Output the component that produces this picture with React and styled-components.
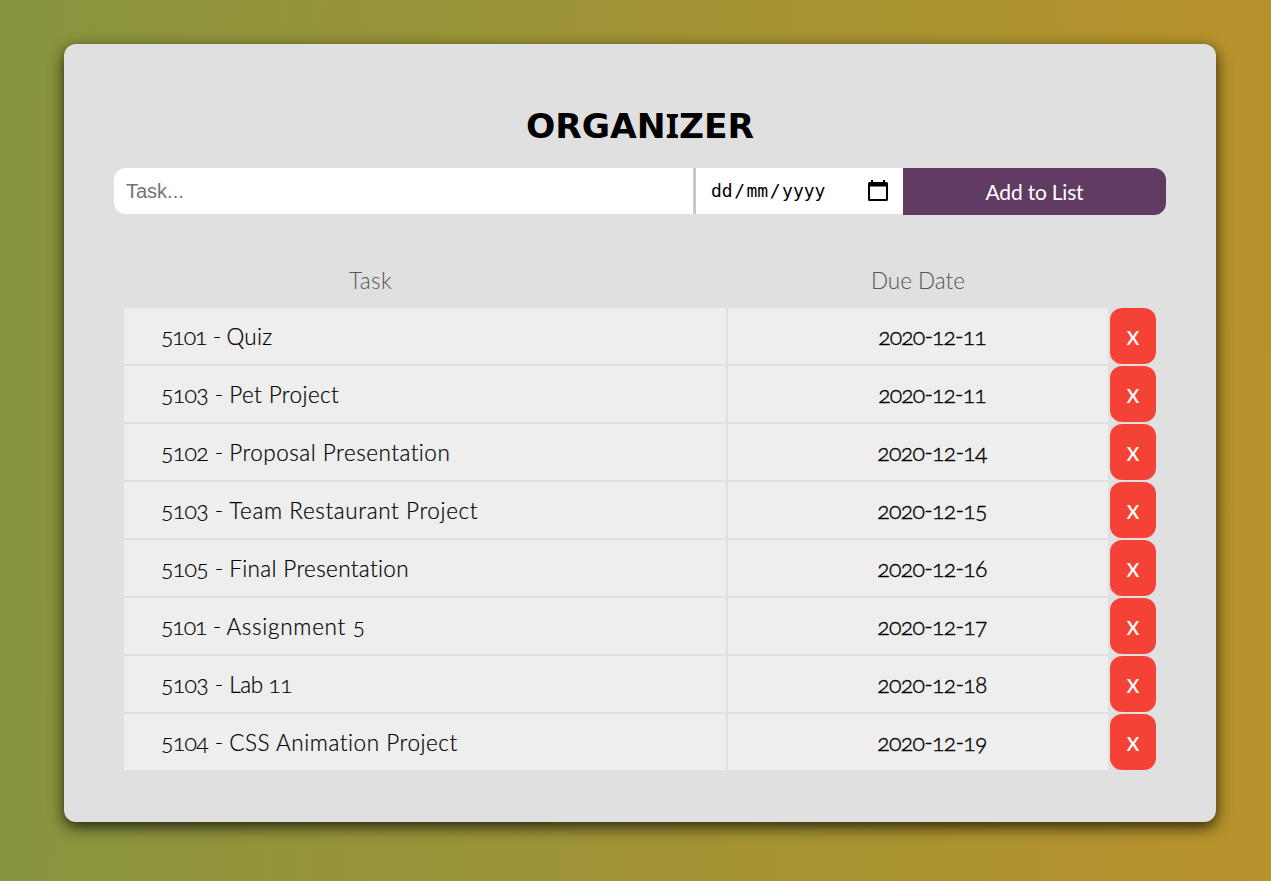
import React from "react";
import styled, { createGlobalStyle } from "styled-components";

const GlobalStyle = createGlobalStyle`
  *, *::before, *::after { box-sizing: border-box; }
  html { height: 100%; }
  body {
    margin: 0;
    min-height: 881px;
    background: linear-gradient(91deg, #88943f 0%, #b8922b 100%);
    font-family: Lato, "Liberation Sans", sans-serif;
    font-variant-numeric: oldstyle-nums;
    font-variant-ligatures: none;
    color: #000;
  }
`;

const Page = styled.main`
  min-height: 881px;
  padding: 44px 55px 59px 64px;
`;

const Card = styled.section`
  width: 1152px;
  height: 778px;
  padding: 59px 50px 0;
  background: #e0e0e0;
  border-radius: 12px;
  box-shadow: 0 5px 15px rgba(0, 0, 0, 0.75);
`;

const Title = styled.h1`
  margin: 0;
  height: 65px;
  font: 700 34.5px/47px "DejaVu Sans", sans-serif;
  text-align: center;
`;

const SerifCapital = styled.span`
  font-family: "Noto Sans", sans-serif;
  font-size: 34px;
  line-height: 1;
`;

const Form = styled.div`
  display: flex;
  align-items: flex-start;
  height: 47px;
`;

const TaskInput = styled.input`
  width: 579px;
  height: 46px;
  padding: 0 12px;
  border: 0;
  border-radius: 12px 0 0 12px;
  background: #fff;
  font: 20px "Liberation Sans", Arial, sans-serif;
  outline: none;
  &::placeholder { color: #757575; opacity: 1; }
`;

const DateField = styled.div`
  display: flex;
  align-items: center;
  justify-content: space-between;
  width: 210px;
  height: 46px;
  padding: 0 14px 0 15px;
  border-left: 3px solid #c8c8c8;
  background: #fff;
`;

const DateText = styled.span`
  display: flex;
  gap: 1.5px;
  font: 18px/24px "DejaVu Sans Mono", monospace;
`;

const AddButton = styled.button`
  width: 263px;
  height: 47px;
  padding: 0 0 1px;
  border: 0;
  border-radius: 0 12px 12px 0;
  background: #613b62;
  color: #fff;
  font: 400 21px Lato, sans-serif;
  letter-spacing: -0.2px;
`;

const List = styled.div`
  display: grid;
  gap: 2px;
  margin: 37px 10px 0;
`;

const Row = styled.div`
  display: grid;
  grid-template-columns: 602px 380px 46px;
  grid-template-rows: 100%;
  gap: 2px;
  height: ${(p) => (p.$head ? 54 : 56)}px;
`;

const Heading = styled.div`
  padding: ${(p) => p.$pad};
  color: #555;
  font-size: 22.5px;
  font-weight: 300;
  line-height: 57px;
  text-align: center;
  letter-spacing: ${(p) => p.$spacing}px;
`;

const Cell = styled.div`
  padding-left: ${(p) => (p.$date ? 28 : 37)}px;
  background: #eee;
  font-size: ${(p) => (p.$date ? 23 : 22.5)}px;
  font-weight: 300;
  -webkit-text-stroke: ${(p) => (p.$date ? 0.4 : 0.2)}px #000;
  line-height: 56px;
  height: 56px;
  white-space: nowrap;
  text-align: ${(p) => (p.$date ? "center" : "left")};
`;

const Label = styled.span`
  letter-spacing: ${(p) => p.$spacing}px;
`;

const Code = styled(Label)`
  font-size: 23px;
  word-spacing: 1.2px;
`;

const RemoveButton = styled.button`
  padding: 0 0 3px;
  border: 0;
  border-radius: 12px;
  background: #f44336;
  color: #fff;
  font: 400 26px Lato, sans-serif;
`;

const tasks = [
  { code: "5101", name: "Quiz", due: "2020-12-11", codeSpacing: -1.1, spacing: 0.3, dueSpacing: -0.9 },
  { code: "5103", name: "Pet Project", due: "2020-12-11", codeSpacing: -0.7, spacing: 0.4, dueSpacing: -0.9 },
  { code: "5102", name: "Proposal Presentation", due: "2020-12-14", codeSpacing: -0.7, spacing: 0.5, dueSpacing: -0.7 },
  { code: "5103", name: "Team Restaurant Project", due: "2020-12-15", codeSpacing: -0.7, spacing: 0.62, dueSpacing: -0.7 },
  { code: "5105", name: "Final Presentation", due: "2020-12-16", codeSpacing: -0.7, spacing: 0.35, dueSpacing: -0.7 },
  { code: "5101", name: "Assignment 5", due: "2020-12-17", codeSpacing: -1.1, spacing: 0.7, dueSpacing: -0.7 },
  { code: "5103", name: "Lab 11", due: "2020-12-18", codeSpacing: -0.7, spacing: -0.4, dueSpacing: -0.7 },
  { code: "5104", name: "CSS Animation Project", due: "2020-12-19", codeSpacing: -0.7, spacing: 0.55, dueSpacing: -0.7 },
];

function CalendarIcon() {
  return (
    <svg width="22" height="24" viewBox="0 0 22 24" aria-hidden="true">
      <path
        fillRule="evenodd"
        d="M4 1h2v2h10V1h2v2h1.500a1.500 1.500 0 0 1 1.500 1.500v16a1.500 1.500 0 0 1-1.500 1.500h-17a1.500 1.500 0 0 1-1.500-1.500v-16A1.500 1.500 0 0 1 2.500 3H4zM3 7.500V20h16V7.500z"
      />
    </svg>
  );
}

export default function App() {
  return (
    <>
      <GlobalStyle />
      <Page>
        <Card>
          <Title>ORGAN<SerifCapital>I</SerifCapital>ZER</Title>
          <Form>
            <TaskInput placeholder="Task..." />
            <DateField>
              <DateText>
                <span>dd</span>
                <span>/</span>
                <span>mm</span>
                <span>/</span>
                <span>yyyy</span>
              </DateText>
              <CalendarIcon />
            </DateField>
            <AddButton>Add to List</AddButton>
          </Form>
          <List>
            <Row $head>
              <Heading $pad="0 109px 0 0" $spacing={0.4}>Task</Heading>
              <Heading $pad="0" $spacing={0}>Due Date</Heading>
            </Row>
            {tasks.map((t) => (
              <Row key={t.code + t.name}>
                <Cell>
                  <Code $spacing={t.codeSpacing}>{t.code} - </Code>
                  <Label $spacing={t.spacing}>{t.name}</Label>
                </Cell>
                <Cell $date><Label $spacing={t.dueSpacing}>{t.due}</Label></Cell>
                <RemoveButton>x</RemoveButton>
              </Row>
            ))}
          </List>
        </Card>
      </Page>
    </>
  );
}
